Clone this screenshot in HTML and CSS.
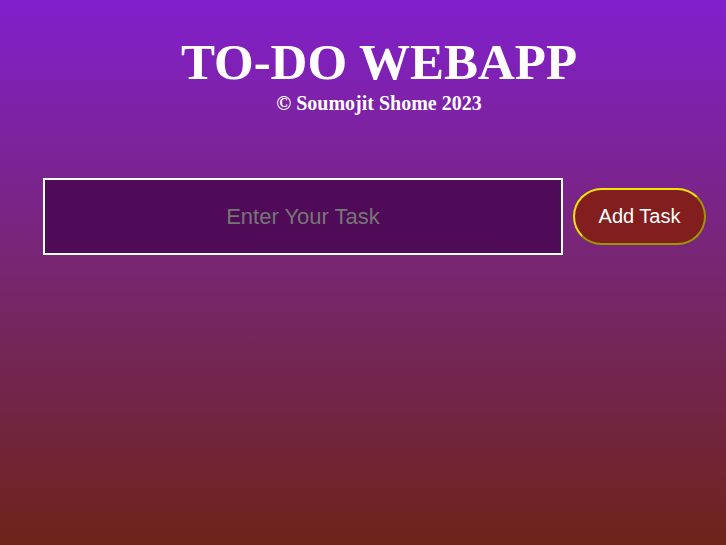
FILE: index.html
```html
<!DOCTYPE html>
<html>
<head>
<meta charset="utf-8">
<link rel="stylesheet" href="styles.css">
</head>
<body>
<header class="header">
  <h1 class="title">TO-DO WEBAPP</h1>
  <p class="credit">© Soumojit Shome 2023</p>
</header>
<div class="entry">
  <input class="task-input" type="text" placeholder="Enter Your Task">
  <button class="add-btn">Add Task</button>
</div>
</body>
</html>
```
FILE: styles.css
```css
html, body {
  margin: 0;
  padding: 0;
  height: 100%;
}
body {
  background: linear-gradient(to bottom, #821fcd 0%, #77266f 50%, #6d2419 100%);
  font-family: "Liberation Serif", "Times New Roman", serif;
  color: #fff;
}
.header {
  margin-left: 32px;
  padding-top: 34px;
  text-align: center;
}
.title {
  margin: 0;
  font-size: 51px;
  line-height: 56px;
  font-weight: bold;
}
.credit {
  margin: 1px 0 0;
  font-size: 20px;
  font-weight: bold;
  line-height: 24px;
}
.entry {
  display: flex;
  align-items: center;
  gap: 10px;
  padding-left: 43px;
  margin-top: 63px;
}
.task-input {
  box-sizing: border-box;
  width: 520px;
  height: 77px;
  border: 2px solid #fff;
  background: #4f0b57;
  color: #fff;
  font-family: "Liberation Sans", Arial, sans-serif;
  font-size: 22px;
  text-align: center;
  outline: none;
  padding: 0;
}
.task-input::placeholder {
  color: #767676;
}
.add-btn {
  box-sizing: border-box;
  width: 133px;
  height: 57px;
  border: 2px outset #f2e600;
  border-radius: 29px;
  background: #831e1e;
  color: #fff;
  font-family: "Liberation Sans", Arial, sans-serif;
  font-size: 20px;
  padding: 0;
}
```
